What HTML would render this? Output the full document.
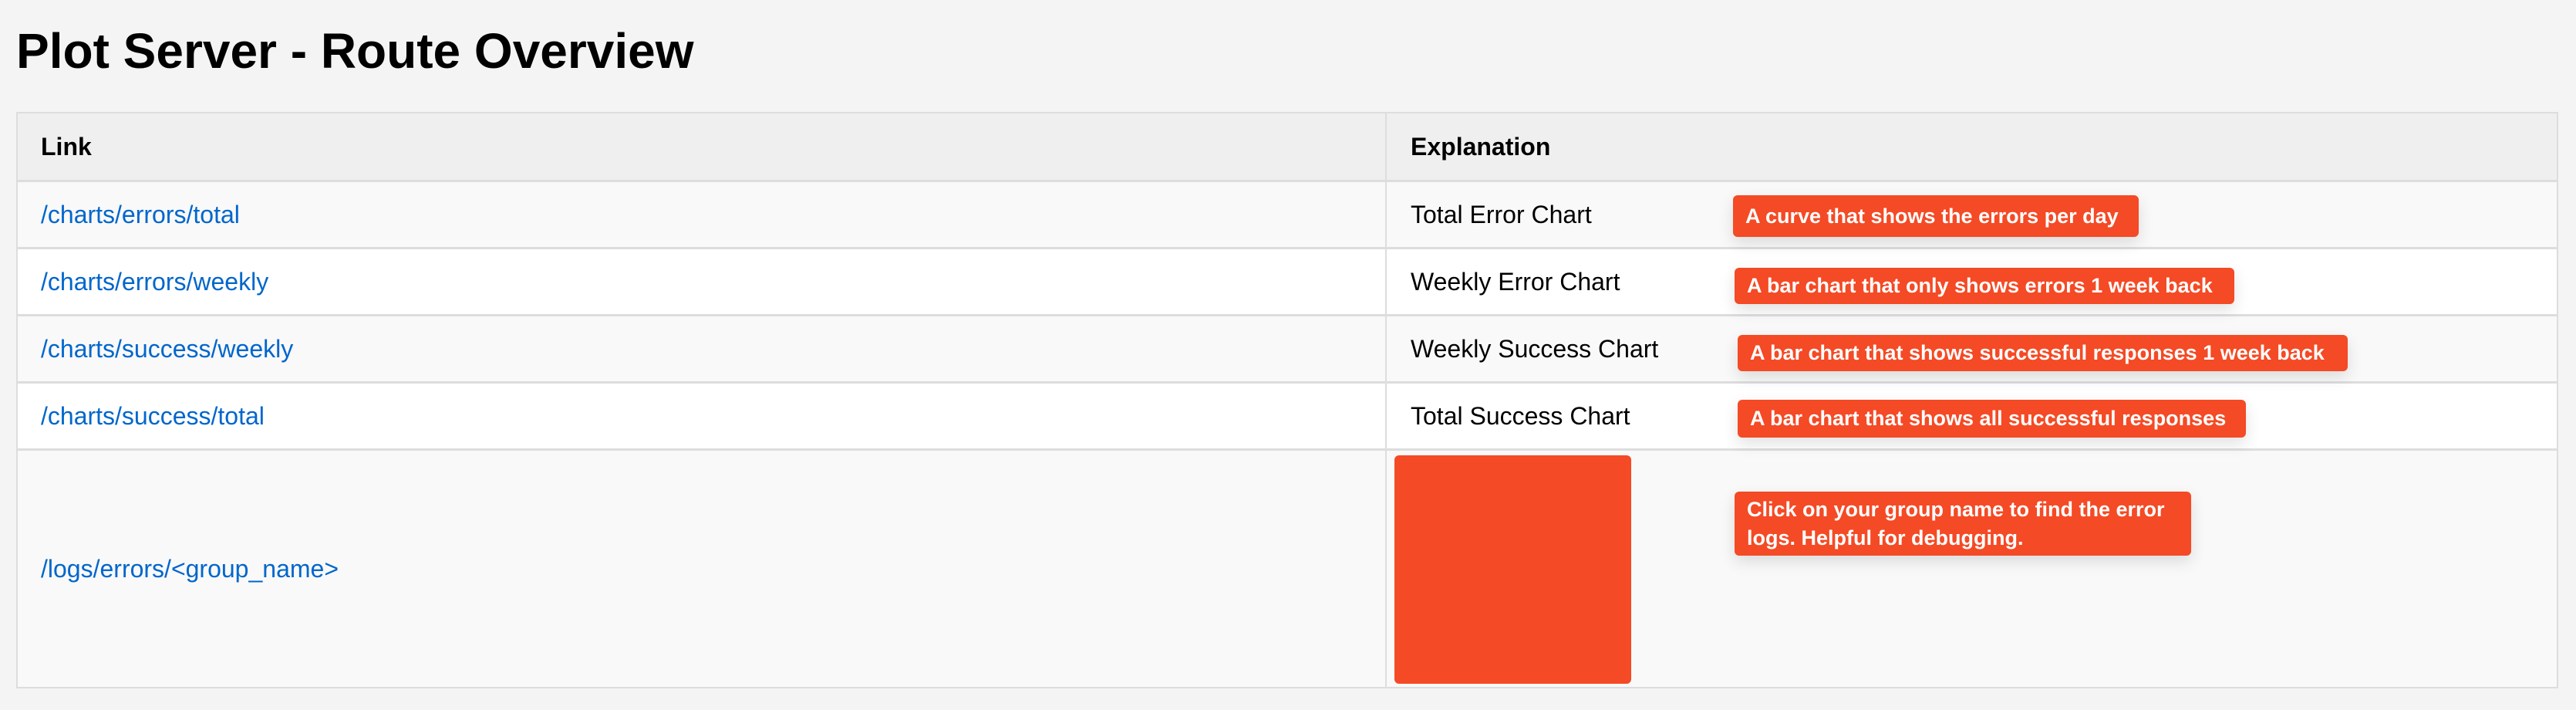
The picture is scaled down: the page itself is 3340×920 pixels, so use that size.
<!DOCTYPE html>
<html><head><meta charset="utf-8"><style>
html,body{margin:0;padding:0}
body{width:3340px;height:920px;background:#f4f4f4;font-family:"Liberation Sans",Arial,sans-serif;position:relative;overflow:hidden}
h1{position:absolute;left:21px;top:30px;margin:0;font-size:64px;font-weight:bold;color:#000;line-height:72px}
.tbl{position:absolute;left:21px;top:145px;width:3296px;height:747px;border:2px solid #ddd;box-sizing:border-box;background:#f9f9f9;overflow:hidden}
.row{position:absolute;left:0;width:100%;border-bottom:3px solid #ddd;box-sizing:border-box}
.c1,.c2{position:absolute;top:0;height:100%;display:flex;align-items:center;font-size:32px;color:#000}
.c1{left:30px;color:#0066cc}
.c2{left:1806px}
.vline{position:absolute;left:1773px;top:0;bottom:0;width:2px;background:#ddd}
.tip{position:absolute;background:#f44a25;color:#fff;font-size:27px;font-weight:bold;border-radius:6px;padding:0 16px;box-sizing:border-box;display:flex;align-items:center;box-shadow:0 8px 20px rgba(0,0,0,0.12);white-space:nowrap}
</style></head><body>
<h1>Plot Server - Route Overview</h1>
<div class="tbl">
 <div class="row" style="top:0;height:89px;background:#efefef"><div class="c1" style="color:#000;font-weight:bold">Link</div><div class="c2" style="font-weight:bold">Explanation</div></div>
 <div class="row" style="top:89px;height:87px;background:#f9f9f9"><div class="c1">/charts/errors/total</div><div class="c2">Total Error Chart</div></div>
 <div class="row" style="top:176px;height:87px;background:#fff"><div class="c1">/charts/errors/weekly</div><div class="c2">Weekly Error Chart</div></div>
 <div class="row" style="top:263px;height:87px;background:#f9f9f9"><div class="c1">/charts/success/weekly</div><div class="c2">Weekly Success Chart</div></div>
 <div class="row" style="top:350px;height:87px;background:#fff"><div class="c1">/charts/success/total</div><div class="c2">Total Success Chart</div></div>
 <div class="row" style="top:437px;height:306px;background:#f9f9f9;border-bottom:none"><div class="c1">/logs/errors/&lt;group_name&gt;</div></div>
 <div class="vline"></div>
</div>
<div style="position:absolute;left:1808px;top:590px;width:307px;height:296px;background:#f44a25;border-radius:6px"></div>
<div class="tip" style="left:2247px;top:253px;width:526px;height:54px">A curve that shows the errors per day</div>
<div class="tip" style="left:2249px;top:347px;width:648px;height:47px">A bar chart that only shows errors 1 week back</div>
<div class="tip" style="left:2253px;top:434px;width:791px;height:47px">A bar chart that shows successful responses 1 week back</div>
<div class="tip" style="left:2253px;top:518px;width:659px;height:49px">A bar chart that shows all successful responses</div>
<div class="tip" style="left:2249px;top:637px;width:592px;height:83px;white-space:normal;line-height:37px">Click on your group name to find the error logs. Helpful for debugging.</div>
</body></html>
